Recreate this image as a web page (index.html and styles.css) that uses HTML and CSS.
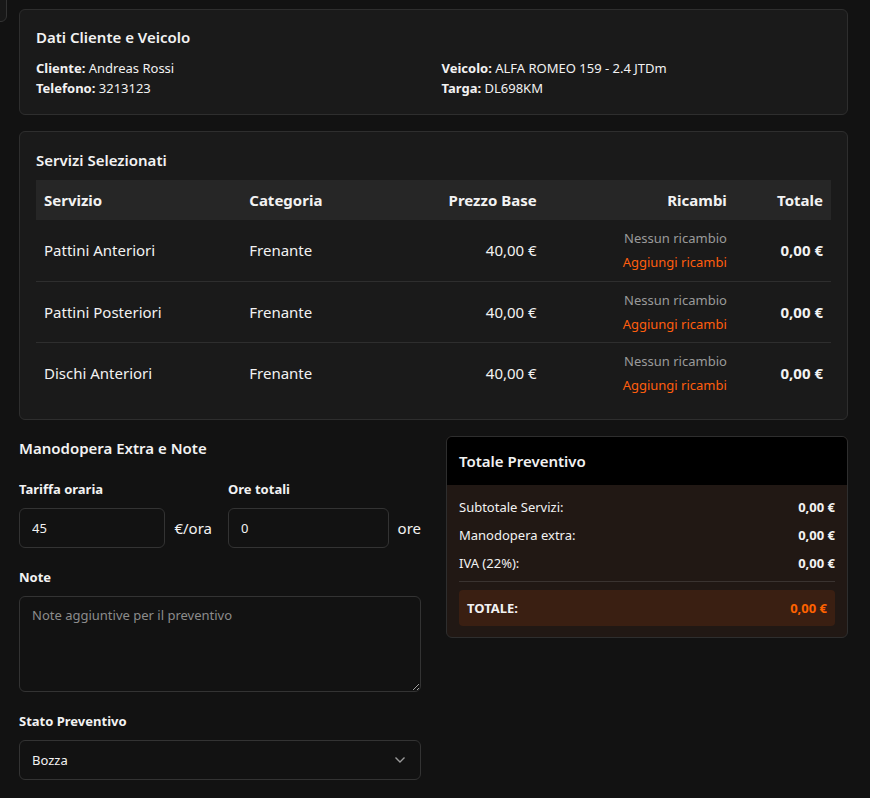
FILE: index.html
```html
<!DOCTYPE html>
<html lang="it">
<head>
<meta charset="utf-8">
<title>Preventivo</title>
<link rel="stylesheet" href="styles.css">
</head>
<body>
<div class="corner-tab"></div>
<main class="page">
  <section class="card info-card">
    <h2 class="card-title">Dati Cliente e Veicolo</h2>
    <div class="info-grid">
      <div>
        <p class="info-line"><b>Cliente:</b> Andreas Rossi</p>
        <p class="info-line"><b>Telefono:</b> 3213123</p>
      </div>
      <div>
        <p class="info-line"><b>Veicolo:</b> ALFA ROMEO 159 - 2.4 JTDm</p>
        <p class="info-line"><b>Targa:</b> DL698KM</p>
      </div>
    </div>
  </section>

  <section class="card services-card">
    <h2 class="card-title">Servizi Selezionati</h2>
    <table class="services">
      <colgroup>
        <col class="c-serv"><col class="c-cat"><col class="c-price"><col class="c-parts"><col class="c-tot">
      </colgroup>
      <thead>
        <tr><th>Servizio</th><th>Categoria</th><th class="r">Prezzo Base</th><th class="r">Ricambi</th><th class="r">Totale</th></tr>
      </thead>
      <tbody>
        <tr>
          <td>Pattini Anteriori</td><td>Frenante</td><td class="r">40,00 €</td>
          <td class="r"><div class="none">Nessun ricambio</div><div class="add">Aggiungi ricambi</div></td>
          <td class="r strong">0,00 €</td>
        </tr>
        <tr>
          <td>Pattini Posteriori</td><td>Frenante</td><td class="r">40,00 €</td>
          <td class="r"><div class="none">Nessun ricambio</div><div class="add">Aggiungi ricambi</div></td>
          <td class="r strong">0,00 €</td>
        </tr>
        <tr>
          <td>Dischi Anteriori</td><td>Frenante</td><td class="r">40,00 €</td>
          <td class="r"><div class="none">Nessun ricambio</div><div class="add">Aggiungi ricambi</div></td>
          <td class="r strong">0,00 €</td>
        </tr>
      </tbody>
    </table>
  </section>

  <div class="bottom">
    <section class="extra">
      <h2 class="section-title">Manodopera Extra e Note</h2>
      <div class="rate-grid">
        <div class="field">
          <label class="label">Tariffa oraria</label>
          <div class="input-row">
            <input class="input" type="text" size="1" value="45">
            <span class="unit">€/ora</span>
          </div>
        </div>
        <div class="field">
          <label class="label">Ore totali</label>
          <div class="input-row">
            <input class="input" type="text" size="1" value="0">
            <span class="unit">ore</span>
          </div>
        </div>
      </div>
      <div class="field gap">
        <label class="label">Note</label>
        <textarea class="textarea" placeholder="Note aggiuntive per il preventivo"></textarea>
      </div>
      <div class="field gap">
        <label class="label">Stato Preventivo</label>
        <div class="select">
          <span>Bozza</span>
          <svg class="chev" width="12" height="8" viewBox="0 0 12 8"><path d="M1.5 1.5 L6 6 L10.5 1.5" fill="none" stroke="#9a9a9a" stroke-width="1.4"/></svg>
        </div>
      </div>
    </section>

    <section class="total-card">
      <div class="total-head">Totale Preventivo</div>
      <div class="total-body">
        <div class="t-row"><span>Subtotale Servizi:</span><b>0,00 €</b></div>
        <div class="t-row"><span>Manodopera extra:</span><b>0,00 €</b></div>
        <div class="t-row"><span>IVA (22%):</span><b>0,00 €</b></div>
        <div class="t-final"><b>TOTALE:</b><b class="orange">0,00 €</b></div>
      </div>
    </section>
  </div>
</main>
</body>
</html>
```
FILE: styles.css
```css
* { box-sizing: border-box; }
html, body { margin: 0; padding: 0; }
body {
  background: #121212;
  color: #f2f2f2;
  font-family: "Noto Sans", "Open Sans", sans-serif;
  font-size: 13px;
  position: relative;
  min-height: 798px;
}
.corner-tab {
  position: absolute;
  left: -10px;
  top: -10px;
  width: 17px;
  height: 32px;
  border: 1px solid #333;
  border-radius: 6px;
  background: #181818;
}
.page {
  padding: 9px 22px 0 19px;
}
.card {
  background: #1a1a1a;
  border: 1px solid #2e2e2e;
  border-radius: 6px;
  padding: 16px 16px 16px;
  margin-bottom: 16px;
}
.card-title, .section-title {
  margin: 0;
  font-size: 15px;
  font-weight: 600;
  line-height: 22px;
}
.info-grid {
  display: grid;
  grid-template-columns: 1fr 1fr;
  column-gap: 16px;
  margin-top: 10px;
}
.info-line { margin: 0; line-height: 20px; }
.info-line b { font-weight: 700; }

.services-card { padding-top: 17px; padding-bottom: 16px; }
.services {
  width: 100%;
  border-collapse: collapse;
  margin-top: 9px;
  font-size: 15px;
}
.c-serv { width: 205px; }
.c-cat { width: 150px; }
.c-price { width: 153px; }
.c-parts { width: 190px; }
.c-tot { width: 96px; }
.services th {
  background: #262626;
  height: 40px;
  padding: 0 8px;
  text-align: left;
  font-weight: 700;
}
.services td {
  padding: 6px 8px;
  height: 61px;
  border-bottom: 1px solid #2e2e2e;
  vertical-align: middle;
}
.services tbody tr:last-child td { border-bottom: none; height: 60px; }
.services .r { text-align: right; }
.services .strong { font-weight: 700; }
.none { color: #9a9a9a; font-size: 13px; line-height: 24px; }
.add { color: #ff5e0e; font-size: 13px; line-height: 24px; }

.bottom {
  display: grid;
  grid-template-columns: minmax(0, 1fr) minmax(0, 1fr);
  gap: 25px;
  align-items: start;
}
.extra .section-title { margin-top: 1px; }
.rate-grid {
  display: grid;
  grid-template-columns: minmax(0, 1fr) minmax(0, 1fr);
  gap: 16px;
  margin-top: 20px;
}
.field { display: flex; flex-direction: column; min-width: 0; }
.field.gap { margin-top: 19px; }
.label {
  font-weight: 700;
  line-height: 20px;
  margin-bottom: 9px;
}
.input-row { display: flex; align-items: center; gap: 9px; }
.input, .textarea, .select {
  background: #121212;
  border: 1px solid #333;
  border-radius: 6px;
  color: #f2f2f2;
  font-family: inherit;
  font-size: 13px;
}
.input {
  flex: 1;
  width: 0;
  min-width: 0;
  height: 40px;
  padding: 0 12px;
  outline: none;
}
.unit { font-size: 15px; }
.textarea {
  height: 96px;
  padding: 9px 12px;
  resize: vertical;
  outline: none;
}
.textarea::placeholder { color: #8c8c8c; }
.select {
  height: 40px;
  padding: 0 14px 0 12px;
  display: flex;
  align-items: center;
  justify-content: space-between;
}

.total-card {
  border: 1px solid #2e2e2e;
  border-radius: 6px;
  overflow: hidden;
  background: #211814;
}
.total-head {
  background: #000;
  height: 48px;
  padding: 0 12px;
  display: flex;
  align-items: center;
  font-size: 15px;
  font-weight: 600;
}
.total-body { padding: 12px 12px 11px; }
.t-row {
  display: flex;
  justify-content: space-between;
  line-height: 20px;
  margin-bottom: 8px;
}
.t-row b { font-weight: 700; }
.t-row:nth-child(3) {
  padding-bottom: 8px;
  border-bottom: 1px solid #3a3330;
  margin-bottom: 8px;
}
.t-final {
  background: #3a1f12;
  border-radius: 4px;
  height: 36px;
  padding: 0 8px;
  display: flex;
  align-items: center;
  justify-content: space-between;
}
.orange { color: #ff6200; }
```
